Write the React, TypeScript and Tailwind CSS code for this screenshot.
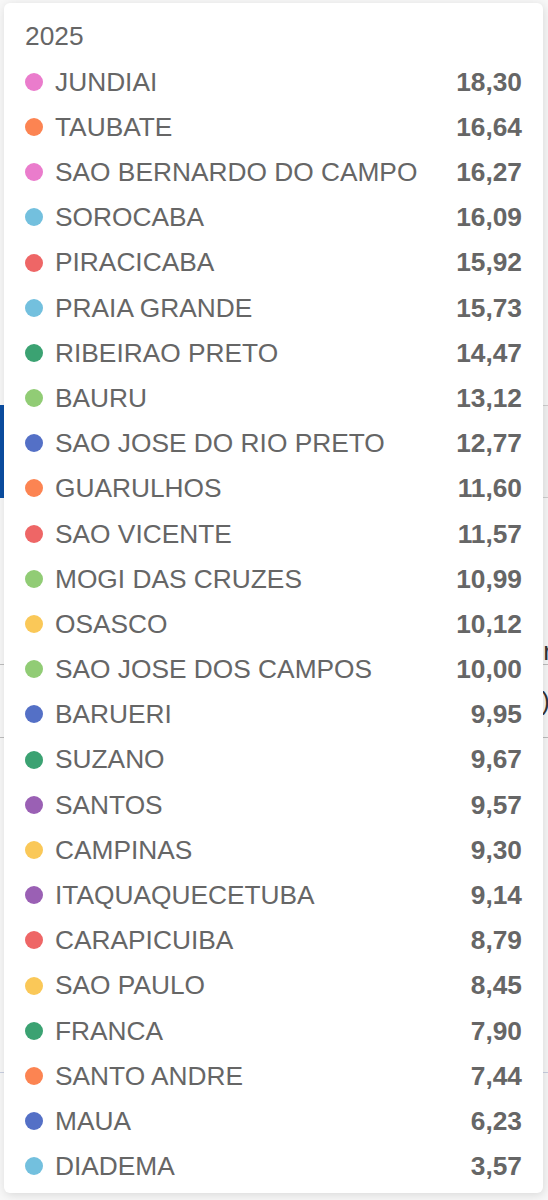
import React from "react";

const C = {
  pink: "#ea7ccc",
  orange: "#fc8452",
  lblue: "#73c0de",
  red: "#ee6666",
  dgreen: "#3ba272",
  lgreen: "#91cc75",
  blue: "#5470c6",
  yellow: "#fac858",
  purple: "#9a60b4",
};

const rows: [string, string, string][] = [
  ["JUNDIAI", "18,30", C.pink],
  ["TAUBATE", "16,64", C.orange],
  ["SAO BERNARDO DO CAMPO", "16,27", C.pink],
  ["SOROCABA", "16,09", C.lblue],
  ["PIRACICABA", "15,92", C.red],
  ["PRAIA GRANDE", "15,73", C.lblue],
  ["RIBEIRAO PRETO", "14,47", C.dgreen],
  ["BAURU", "13,12", C.lgreen],
  ["SAO JOSE DO RIO PRETO", "12,77", C.blue],
  ["GUARULHOS", "11,60", C.orange],
  ["SAO VICENTE", "11,57", C.red],
  ["MOGI DAS CRUZES", "10,99", C.lgreen],
  ["OSASCO", "10,12", C.yellow],
  ["SAO JOSE DOS CAMPOS", "10,00", C.lgreen],
  ["BARUERI", "9,95", C.blue],
  ["SUZANO", "9,67", C.dgreen],
  ["SANTOS", "9,57", C.purple],
  ["CAMPINAS", "9,30", C.yellow],
  ["ITAQUAQUECETUBA", "9,14", C.purple],
  ["CARAPICUIBA", "8,79", C.red],
  ["SAO PAULO", "8,45", C.yellow],
  ["FRANCA", "7,90", C.dgreen],
  ["SANTO ANDRE", "7,44", C.orange],
  ["MAUA", "6,23", C.blue],
  ["DIADEMA", "3,57", C.lblue],
];

export default function App() {
  return (
    <div
      className="relative w-[548px] h-[1200px] overflow-hidden bg-[#f7f7f7]"
      style={{ fontFamily: '"Liberation Sans", Arial, sans-serif' }}
    >
      {/* background page */}
      <div className="flex flex-col">
        <div className="h-[405px]" />
        <div className="flex h-[93px]">
          <div className="w-[5px] bg-[#0b4ea2]" />
          <div className="flex-1 border-y border-[#cfcfcf] bg-[#f2f2f2]" />
        </div>
        <div className="h-[130px]" />
        <div className="h-[36px] flex justify-end items-end text-[26px] text-[#333] leading-none pr-0">
          <span className="-mr-[4px]">r</span>
        </div>
        <div className="h-[74px] border-y border-[#bdbdbd] flex justify-end items-center text-[26px] text-[#333] leading-none">
          <span className="-mr-[2px]">)</span>
        </div>
        <div className="h-[334px]" />
        <div className="h-px bg-[#c9cfe0]" />
      </div>

      {/* tooltip */}
      <div className="absolute left-[4px] top-[3px] w-[539px] h-[1190px] rounded-[6px] bg-white shadow-[1px_2px_10px_rgba(0,0,0,0.12)] pl-[21px] pr-[21px] pt-[11px] text-[#666666]">
        <div className="h-[45.2px] flex items-center text-[26.3px] leading-none">2025</div>
        {rows.map(([name, val, color]) => (
          <div key={name} className="h-[45.2px] flex items-center text-[26.3px] leading-none">
            <span
              className="inline-block w-[18px] h-[18px] rounded-full mr-[12px] shrink-0"
              style={{ backgroundColor: color }}
            />
            <span className="flex-1">{name}</span>
            <span className="font-bold">{val}</span>
          </div>
        ))}
      </div>
    </div>
  );
}
